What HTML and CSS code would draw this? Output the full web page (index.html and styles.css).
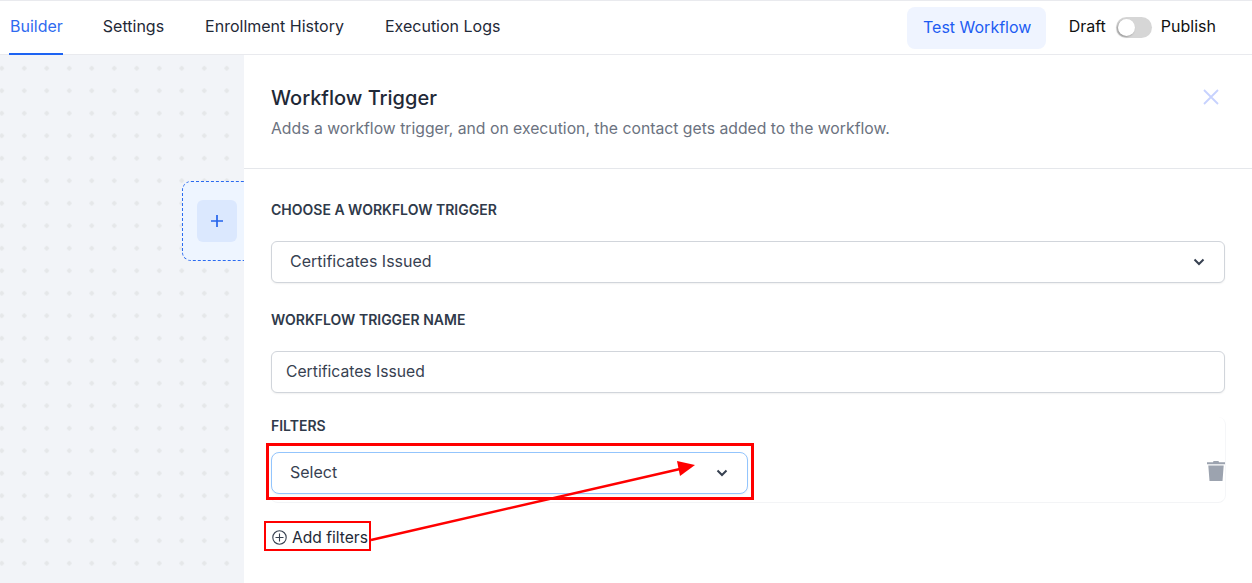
FILE: index.html
```html
<!DOCTYPE html>
<html lang="en">
<head>
  <meta charset="UTF-8">
  <title>Workflow Trigger</title>
  <link rel="stylesheet" href="styles.css">
</head>
<body>

  <header class="topbar">
    <nav class="tabs">
      <a class="tab active">Builder</a>
      <a class="tab">Settings</a>
      <a class="tab">Enrollment History</a>
      <a class="tab">Execution Logs</a>
    </nav>
    <div class="actions">
      <button class="test-btn">Test Workflow</button>
      <span class="state">Draft</span>
      <span class="switch"><span class="knob"></span></span>
      <span class="state">Publish</span>
    </div>
  </header>

  <main class="main">
    <section class="canvas">
      <div class="node">
        <div class="node-add">
          <svg width="14" height="14" viewBox="0 0 14 14"><path d="M7 1v12M1 7h12" stroke="#2563eb" stroke-width="1.7" fill="none"/></svg>
        </div>
      </div>
    </section>

    <section class="panel">
      <div class="panel-head">
        <div>
          <h2>Workflow Trigger</h2>
          <p>Adds a workflow trigger, and on execution, the contact gets added to the workflow.</p>
        </div>
        <svg class="close" width="18" height="18" viewBox="0 0 18 18"><path d="M2 2l14 14M16 2L2 16" stroke="#c7d2fe" stroke-width="1.8" fill="none"/></svg>
      </div>

      <div class="panel-body">
        <label class="field-label first">CHOOSE A WORKFLOW TRIGGER</label>
        <div class="select trigger-select">
          <span>Certificates Issued</span>
          <svg class="chev" width="12" height="8" viewBox="0 0 12 8"><path d="M1.500 1.500L6 6l4.500-4.500" stroke="#374151" stroke-width="2" fill="none"/></svg>
        </div>

        <label class="field-label name-label">WORKFLOW TRIGGER NAME</label>
        <div class="text-input">Certificates Issued</div>

        <div class="filters">
          <label class="field-label filters-label">FILTERS</label>
          <div class="filter-row">
            <div class="select filter-select">
              <span>Select</span>
              <svg class="chev" width="12" height="8" viewBox="0 0 12 8"><path d="M1.500 1.500L6 6l4.500-4.500" stroke="#374151" stroke-width="2" fill="none"/></svg>
            </div>
            <svg class="trash" width="18" height="20" viewBox="0 0 18 20"><path d="M6.500 0h5l.5 1.300h6v1.900H0V1.300h6zM1.300 4.500h15.400L15.500 20h-13z" fill="#9ca3af"/></svg>
          </div>
        </div>

        <div class="add-filters">
          <svg width="15" height="15" viewBox="0 0 15 15"><circle cx="7.500" cy="7.500" r="6.700" stroke="#374151" stroke-width="1.100" fill="none"/><path d="M7.500 3.500v8M3.500 7.500h8" stroke="#374151" stroke-width="1.100" fill="none"/></svg>
          <span>Add filters</span>
        </div>
      </div>
    </section>
  </main>

  <!-- annotation drawn on top of the screenshot -->
  <svg class="markup" width="1252" height="583" viewBox="0 0 1252 583">
    <rect x="267.500" y="444.500" width="485" height="54" fill="none" stroke="#f00" stroke-width="3"/>
    <rect x="265" y="522" width="105" height="28" fill="none" stroke="#f00" stroke-width="2"/>
    <path d="M371 540L680 469" stroke="#f00" stroke-width="2.500" fill="none"/>
    <path d="M695 465L677 461L680 476z" fill="#f00"/>
  </svg>

</body>
</html>
```

FILE: styles.css
```css
* {
  box-sizing: border-box;
}

html, body {
  height: 100%;
}

body {
  margin: 0;
  font-family: 'Inter', sans-serif;
  color: #111827;
  background: #fff;
  overflow: hidden;
}

.topbar {
  height: 55px;
  display: flex;
  justify-content: space-between;
  border-top: 1px solid #e9eaee;
  border-bottom: 1px solid #e9eaee;
  padding-left: 9px;
}

.tabs {
  display: flex;
  gap: 40px;
}

.tab {
  padding-right: 1px;
  font-size: 16px;
  line-height: 51px;
  height: 54px;
  color: #1f2937;
}

.tab.active {
  padding: 0 0 0 1px;
  color: #2f6bf0;
  border-bottom: 2px solid #1d63f2;
}

.actions {
  display: flex;
  align-items: center;
  padding-right: 36px;
}

.test-btn {
  width: 139px;
  height: 42px;
  margin-right: 23px;
  padding: 0 0 2px 2px;
  border: none;
  border-radius: 8px;
  background: #eff4ff;
  color: #1d5cf2;
  font-family: inherit;
  font-size: 16px;
}

.state {
  font-size: 16px;
  color: #111;
  padding-bottom: 3px;
}

.switch {
  width: 36px;
  height: 21px;
  margin: 0 9px 0 10px;
  padding: 2px;
  border-radius: 11px;
  background: #d6d6d6;
}

.knob {
  display: block;
  width: 17px;
  height: 17px;
  border-radius: 50%;
  background: #fff;
  box-shadow: -1px 1px 2px rgba(0,0,0,0.3);
}

.main {
  display: flex;
  height: 528px;
}

.canvas {
  width: 244px;
  flex-shrink: 0;
  overflow: hidden;
  padding: 126px 0 0 182px;
  background-color: #f2f4f8;
  background-image: radial-gradient(circle, #e5e7e9 2px, transparent 2.300px);
  background-size: 22.500px 22.500px;
  background-position: -9.500px 2px;
}

.node {
  width: 100px;
  height: 80px;
  padding: 18px 0 0 14px;
  border: 1px dashed #2a6af0;
  border-radius: 9px;
  background: #eef5ff;
}

.node-add {
  width: 40px;
  height: 42px;
  display: flex;
  align-items: center;
  justify-content: center;
  border-radius: 6px;
  background: #dbe8fe;
}

.panel {
  flex: 1;
  background: #fff;
}

.panel-head {
  height: 114px;
  display: flex;
  justify-content: space-between;
  padding: 31px 32px 0 27px;
  border-bottom: 1px solid #e5e7eb;
}

.panel-head h2 {
  margin: 0;
  font-size: 20px;
  line-height: 24px;
  font-weight: 500;
  color: #1f2937;
}

.panel-head p {
  margin: 9px 0 0;
  font-size: 15.750px;
  line-height: 20px;
  color: #6b7280;
}

.close {
  margin-top: 2px;
}

.panel-body {
  padding: 0 27px;
}

.field-label {
  display: block;
  font-size: 14px;
  line-height: 17px;
  font-weight: 600;
  color: #2f3a4a;
}

.first {
  padding-top: 32px;
}

.select, .text-input {
  display: flex;
  align-items: center;
  justify-content: space-between;
  height: 42px;
  border: 1px solid #d1d5db;
  border-radius: 6px;
  font-size: 16px;
  color: #374151;
  background: #fff;
  box-shadow: 0 1px 2px rgba(0,0,0,0.06);
}

.select span {
  padding-bottom: 2px;
}

.select {
  padding: 0 19px 0 18px;
}

.trigger-select {
  margin-top: 23px;
}

.name-label {
  margin-top: 28px;
}

.text-input {
  margin-top: 23px;
  padding: 0 14px 2px;
  font-size: 15.700px;
}

.filters {
  margin: 24px -1px 0;
  padding: 0 0 9px 1px;
  height: 86px;
  border-right: 1px solid #f5f6f8;
  border-bottom: 1px solid #f3f4f6;
  border-radius: 8px;
}

.filter-row {
  display: flex;
  justify-content: space-between;
  align-items: center;
  margin-top: 18px;
}

.filter-select {
  width: 477px;
  border-color: #93c5fd;
  border-radius: 8px;
}

.trash {
  margin: 0 0 4px;
}

.add-filters {
  display: flex;
  align-items: center;
  gap: 5px;
  margin-top: 25px;
  margin-left: 1px;
  font-size: 15.600px;
  color: #1f2937;
}

.markup {
  position: absolute;
  top: 0;
  left: 0;
  pointer-events: none;
}
```
